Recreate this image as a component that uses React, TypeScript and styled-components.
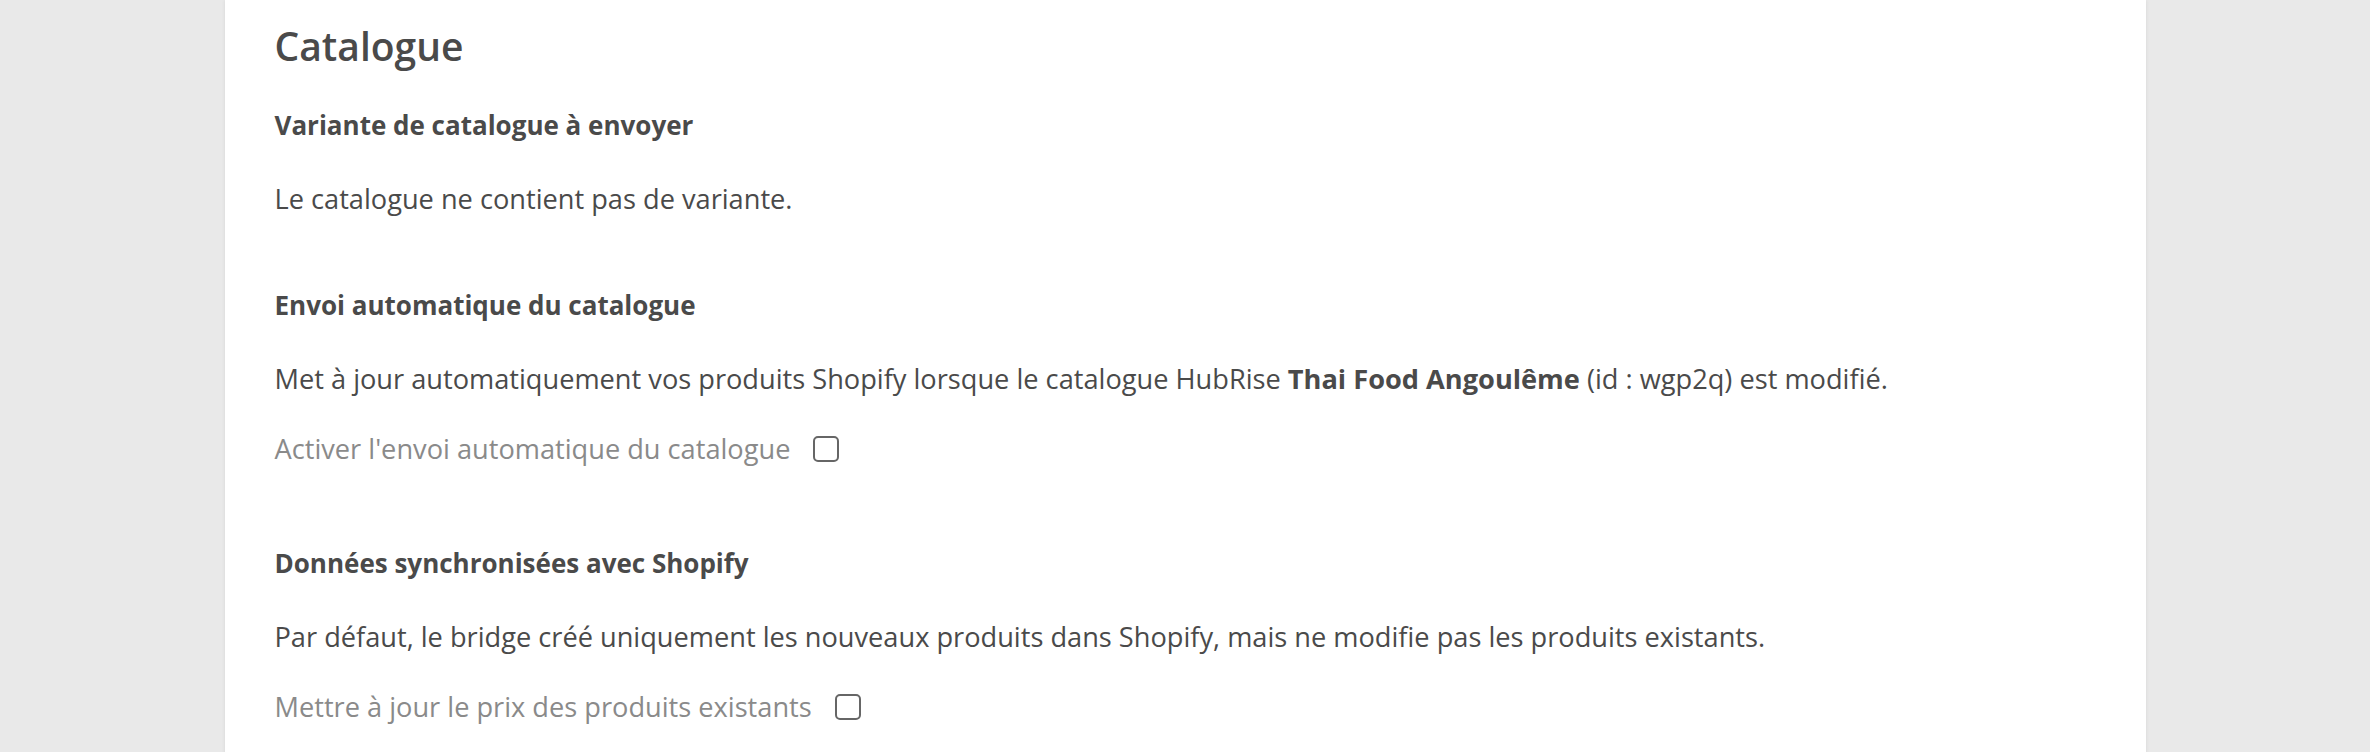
import React from "react";
import styled, { createGlobalStyle } from "styled-components";

const GlobalStyle = createGlobalStyle`
  html, body { margin: 0; padding: 0; }
  body {
    background: #e9e9e9;
    font-family: "Open Sans", "Noto Sans", sans-serif;
    color: #4a4a4a;
  }
`;

const Page = styled.div`
  display: flex;
  justify-content: center;
  min-height: 752px;
`;

const Card = styled.main`
  width: 1921px;
  background: #ffffff;
  box-shadow: 0 0 4px rgba(0, 0, 0, 0.08);
  padding: 22px 50px 0;
  box-sizing: border-box;
`;

const Title = styled.h2`
  margin: 0 0 37px;
  font-size: 39px;
  line-height: 48px;
  font-weight: 600;
  color: #4a4a4a;
`;

const Section = styled.section<{ $gap: number }>`
  margin-bottom: ${(p) => p.$gap}px;
`;

const Subhead = styled.h3`
  margin: 0 0 38px;
  font-size: 26px;
  line-height: 36px;
  font-weight: 700;
  color: #4a4a4a;
`;

const Text = styled.p`
  margin: 0;
  font-size: 27.2px;
  line-height: 36px;
  color: #4a4a4a;
  strong { font-weight: 700; }
`;

const CheckRow = styled.label`
  display: flex;
  align-items: center;
  gap: 23px;
  margin-top: 34px;
  font-size: 27.2px;
  line-height: 36px;
  color: #8a8a8a;
`;

const Box = styled.input`
  appearance: none;
  margin: 0;
  width: 26px;
  height: 26px;
  border: 2px solid #666666;
  border-radius: 5px;
  background: #fff;
  box-sizing: border-box;
`;

export default function App() {
  return (
    <>
      <GlobalStyle />
      <Page>
        <Card>
          <Title>Catalogue</Title>
          <Section $gap={70}>
            <Subhead>Variante de catalogue à envoyer</Subhead>
            <Text>Le catalogue ne contient pas de variante.</Text>
          </Section>
          <Section $gap={78}>
            <Subhead>Envoi automatique du catalogue</Subhead>
            <Text>
              Met à jour automatiquement vos produits Shopify lorsque le catalogue HubRise{" "}
              <strong>Thai Food Angoulême</strong> (id : wgp2q) est modifié.
            </Text>
            <CheckRow>
              Activer l'envoi automatique du catalogue
              <Box type="checkbox" />
            </CheckRow>
          </Section>
          <Section $gap={40}>
            <Subhead>Données synchronisées avec Shopify</Subhead>
            <Text>
              Par défaut, le bridge créé uniquement les nouveaux produits dans Shopify, mais ne modifie pas les
              produits existants.
            </Text>
            <CheckRow>
              Mettre à jour le prix des produits existants
              <Box type="checkbox" />
            </CheckRow>
          </Section>
        </Card>
      </Page>
    </>
  );
}
